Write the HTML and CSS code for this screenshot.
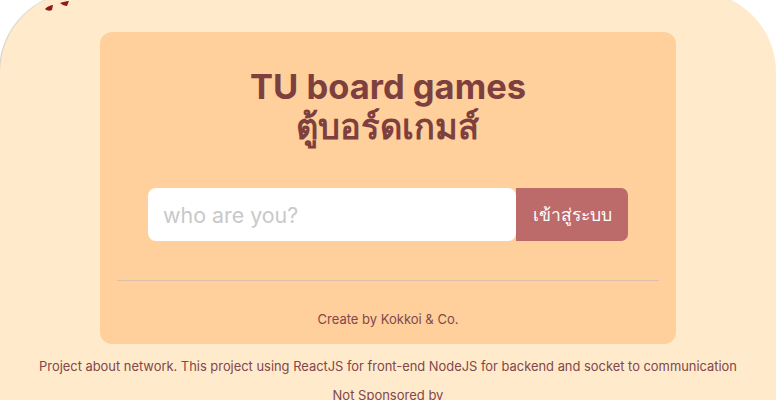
FILE: index.html
```html
<!DOCTYPE html>
<html lang="th">
<head>
<meta charset="utf-8">
<title>TU board games</title>
<link rel="stylesheet" href="styles.css">
</head>
<body>
<div class="page">
  <svg class="deco" width="40" height="12" viewBox="0 0 40 12">
    <path d="M1 9 C4 6 7 5 9 5 L8 10 C6 11 3 11 1 9 Z" fill="#8e1b1b"/>
    <path d="M16 3 C19 2 22 1 25 1 L23 6 C21 6 18 5 16 3 Z" fill="#8e1b1b"/>
  </svg>
  <main class="card">
    <h1 class="title">TU board games<br>ตู้บอร์ดเกมส์</h1>
    <form class="login">
      <input class="name" type="text" placeholder="who are you?">
      <button class="enter" type="button">เข้าสู่ระบบ</button>
    </form>
    <hr class="rule">
    <p class="credit">Create by Kokkoi &amp; Co.</p>
  </main>
  <p class="about">Project about network. This project using ReactJS for front-end NodeJS for backend and socket to communication</p>
  <p class="sponsor">Not Sponsored by</p>
</div>
</body>
</html>
```

FILE: styles.css
```css
html, body {
  margin: 0;
  padding: 0;
  background: #ffffff;
  font-family: Inter, "Noto Sans", sans-serif;
  overflow: hidden;
}

.page {
  position: relative;
  margin-top: -8px;
  padding-top: 40px;
  min-height: 460px;
  background: #ffebcc;
  border-radius: 80px 80px 0 0;
  box-shadow: -1px 0 1px rgba(120, 110, 90, 0.35);
  display: flex;
  flex-direction: column;
  align-items: center;
}

.deco {
  position: absolute;
  left: 44px;
  top: 8px;
}

.card {
  width: 576px;
  box-sizing: border-box;
  background: #ffd09b;
  border-radius: 12px;
  padding: 35px 17px 0;
  height: 312px;
  display: flex;
  flex-direction: column;
  align-items: center;
}

.title {
  margin: 0;
  font-size: 34.5px;
  line-height: 40px;
  font-weight: 700;
  color: #7e3f3f;
  text-align: center;
}

.login {
  margin: 41px 0 0;
  display: flex;
  height: 53px;
}

.name {
  width: 368px;
  box-sizing: border-box;
  border: none;
  outline: none;
  background: #ffffff;
  border-radius: 8px;
  padding: 0 15px;
  font-family: Inter, sans-serif;
  font-size: 21.4px;
  color: #333;
}

.name::placeholder {
  color: #c9c9c9;
}

.enter {
  width: 112px;
  margin-left: 0;
  border: none;
  background: #bd6a6a;
  color: #ffffff;
  border-radius: 0 7px 7px 0;
  font-family: Inter, sans-serif;
  font-size: 17.5px;
  padding: 0;
}

.rule {
  align-self: stretch;
  margin: 39px 0 0;
  border: none;
  border-top: 1px solid #dcbfa8;
  height: 0;
}

.credit {
  margin: 30px 0 0;
  font-size: 13px;
  line-height: 16px;
  color: #82474a;
}

.about {
  margin: 15px 0 0;
  font-size: 12.9px;
  line-height: 16px;
  color: #82474a;
}

.sponsor {
  margin: 12px 0 0;
  font-size: 13px;
  line-height: 16px;
  color: #82474a;
}
```
